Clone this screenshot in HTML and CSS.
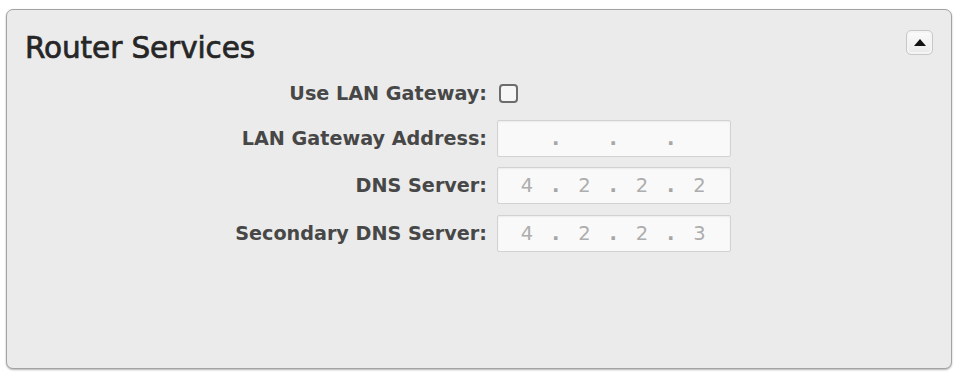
FILE: index.html
```html
<!DOCTYPE html>
<html>
<head>
<meta charset="utf-8">
<link rel="stylesheet" href="styles.css">
</head>
<body>
<div class="panel">
  <div class="header">
    <h1 class="title">Router Services</h1>
    <div class="collapse">
      <svg width="12" height="7" viewBox="0 0 12 7"><polygon points="0,7 6,0 12,7" fill="#111"/></svg>
    </div>
  </div>
  <div class="form">
    <div class="label row-check">Use LAN Gateway:</div>
    <div class="field row-check"><span class="checkbox"></span></div>

    <div class="label">LAN Gateway Address:</div>
    <div class="field">
      <div class="ip">
        <span class="oct"></span><span class="dot">.</span><span class="oct"></span><span class="dot">.</span><span class="oct"></span><span class="dot">.</span><span class="oct"></span>
      </div>
    </div>

    <div class="label">DNS Server:</div>
    <div class="field">
      <div class="ip">
        <span class="oct">4</span><span class="dot">.</span><span class="oct">2</span><span class="dot">.</span><span class="oct">2</span><span class="dot">.</span><span class="oct">2</span>
      </div>
    </div>

    <div class="label">Secondary DNS Server:</div>
    <div class="field">
      <div class="ip">
        <span class="oct">4</span><span class="dot">.</span><span class="oct">2</span><span class="dot">.</span><span class="oct">2</span><span class="dot">.</span><span class="oct">3</span>
      </div>
    </div>
  </div>
</div>
</body>
</html>
```

FILE: styles.css
```css
html, body {
  margin: 0;
  background: #ffffff;
}
body {
  padding: 9px 4px 4px 6px;
  font-family: "DejaVu Sans", Verdana, sans-serif;
}
.panel {
  box-sizing: border-box;
  width: 946px;
  height: 360px;
  background: #ebebeb;
  border: 1px solid #a3a3a3;
  border-radius: 7px;
  box-shadow: 0 1px 2px rgba(0,0,0,0.3);
  padding: 21px 18px 0 18px;
}
.header {
  display: flex;
  justify-content: space-between;
  align-items: flex-start;
}
.title {
  margin: 0;
  font-size: 29.5px;
  line-height: 34px;
  font-weight: normal;
  color: #262626;
  letter-spacing: -0.1px;
  -webkit-text-stroke: 0.7px #262626;
}
.collapse {
  box-sizing: border-box;
  width: 27px;
  height: 25px;
  margin-top: -1px;
  border: 1px solid #c8c8c8;
  border-radius: 5px;
  background: linear-gradient(#fcfcfc, #e9e9e9);
  box-shadow: inset 0 0 0 2px #f4f4f4;
  display: flex;
  align-items: center;
  justify-content: center;
}
.form {
  display: grid;
  grid-template-columns: 462px 234px;
  column-gap: 10px;
  grid-template-rows: 26px 37px 37px 37px;
  row-gap: 10.5px;
  margin-top: 18px;
}
.label {
  display: flex;
  align-items: center;
  justify-content: flex-end;
  font-size: 19.2px;
  font-weight: bold;
  color: #474747;
}
.row-check {
  margin-bottom: 4.5px;
}
.field {
  display: flex;
  align-items: center;
}
.checkbox {
  box-sizing: border-box;
  width: 19px;
  height: 19px;
  margin-left: 2px;
  border: 2px solid #6c6c6c;
  border-radius: 4px;
  background: #f6f6f6;
}
.ip {
  box-sizing: border-box;
  width: 234px;
  height: 37px;
  border: 1px solid #d2d2d2;
  border-radius: 2px;
  background: #f9f9f9;
  box-shadow: inset 0 1px 2px rgba(0,0,0,0.06);
  display: flex;
  align-items: center;
  padding-left: 9px;
  font-size: 19.5px;
  color: #adadad;
}
.oct {
  width: 40px;
  text-align: center;
}
.dot {
  width: 17.5px;
  text-align: center;
  font-weight: bold;
  color: #a6a6a6;
}
```
